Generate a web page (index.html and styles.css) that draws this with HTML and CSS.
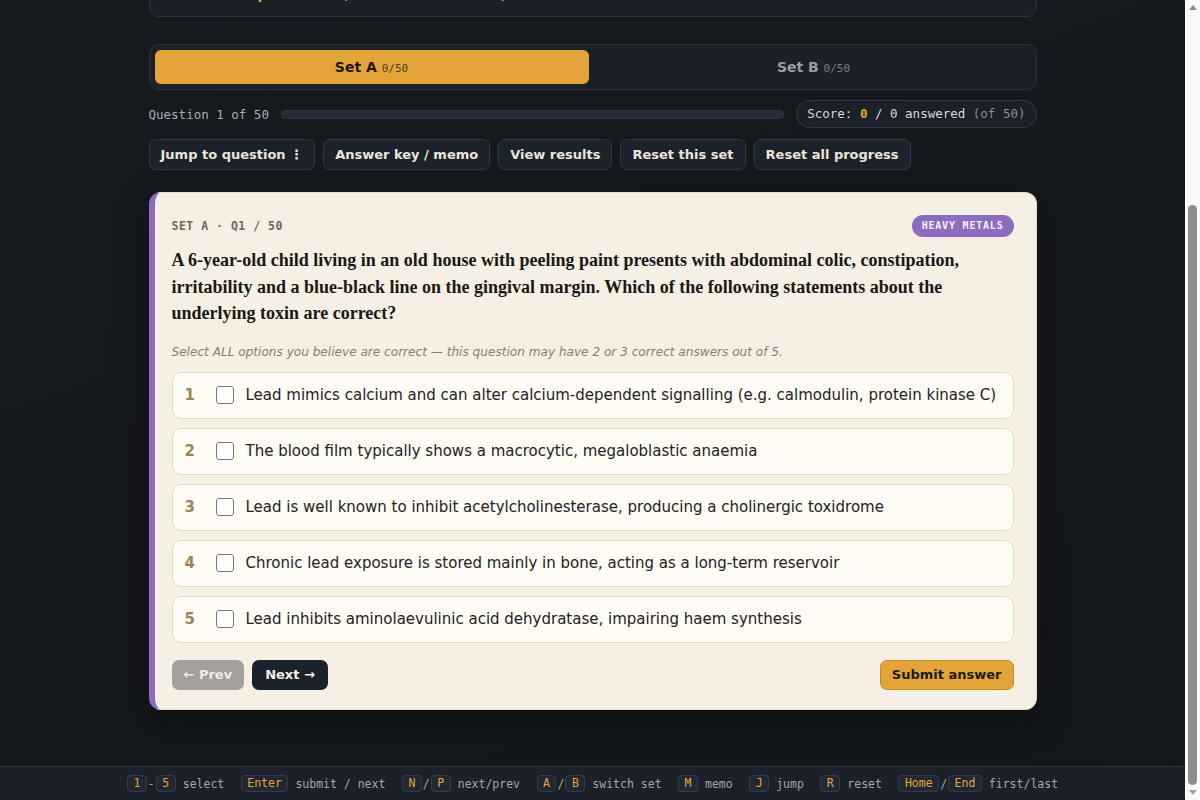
FILE: index.html
```html
<!DOCTYPE html>
<html lang="en">
<head>
<meta charset="utf-8">
<title>Toxicology MCQ Practice</title>
<link rel="stylesheet" href="styles.css">
</head>
<body>
<main class="wrap">
  <header class="intro">
    <div class="eyebrow">TOXICOLOGY · MULTI-SELECT PRACTICE</div>
    <h1 class="intro-title">Clinical Toxicology Question Bank</h1>
    <p class="intro-text">Two independent sets of 50 multi-select questions. Your progress, answers and scores are saved locally in this browser.</p>
    <div class="intro-meta">
      <span class="meta-chip">100 questions</span>
      <span class="meta-chip">2 sets</span>
      <span class="meta-chip">Keyboard friendly</span>
    </div>
  </header>

  <details class="howto">
    <summary class="howto-summary"><span class="howto-caret">›</span> How this quiz works (multi-select format)</summary>
    <div class="howto-body">Each question has 5 statements; 2 or 3 of them are correct.</div>
  </details>

  <nav class="tabs">
    <button class="tab tab-active">Set A <span class="tab-count">0/50</span></button>
    <button class="tab">Set B <span class="tab-count">0/50</span></button>
  </nav>

  <div class="progress-row">
    <span class="progress-label">Question 1 of 50</span>
    <div class="progress-bar"><div class="progress-fill" style="width:0%"></div></div>
    <span class="score-pill">Score: <span class="score-num">0</span> / 0 answered <span class="score-dim">(of 50)</span></span>
  </div>

  <div class="toolbar">
    <button class="tool-btn">Jump to question <span class="tool-dots">⋮</span></button>
    <button class="tool-btn">Answer key / memo</button>
    <button class="tool-btn">View results</button>
    <button class="tool-btn">Reset this set</button>
    <button class="tool-btn">Reset all progress</button>
  </div>

  <section class="card">
    <div class="card-head">
      <span class="card-ref">SET A · Q1 / 50</span>
      <span class="badge">HEAVY METALS</span>
    </div>
    <h2 class="question">A 6-year-old child living in an old house with peeling paint presents with abdominal colic, constipation, irritability and a blue-black line on the gingival margin. Which of the following statements about the underlying toxin are correct?</h2>
    <p class="hint">Select ALL options you believe are correct — this question may have 2 or 3 correct answers out of 5.</p>

    <div class="options">
      <label class="option"><span class="opt-num">1</span><input class="opt-check" type="checkbox"><span class="opt-text">Lead mimics calcium and can alter calcium-dependent signalling (e.g. calmodulin, protein kinase C)</span></label>
      <label class="option"><span class="opt-num">2</span><input class="opt-check" type="checkbox"><span class="opt-text">The blood film typically shows a macrocytic, megaloblastic anaemia</span></label>
      <label class="option"><span class="opt-num">3</span><input class="opt-check" type="checkbox"><span class="opt-text">Lead is well known to inhibit acetylcholinesterase, producing a cholinergic toxidrome</span></label>
      <label class="option"><span class="opt-num">4</span><input class="opt-check" type="checkbox"><span class="opt-text">Chronic lead exposure is stored mainly in bone, acting as a long-term reservoir</span></label>
      <label class="option"><span class="opt-num">5</span><input class="opt-check" type="checkbox"><span class="opt-text">Lead inhibits aminolaevulinic acid dehydratase, impairing haem synthesis</span></label>
    </div>

    <div class="card-nav">
      <div class="nav-left">
        <button class="nav-btn nav-prev">← Prev</button>
        <button class="nav-btn nav-next">Next →</button>
      </div>
      <button class="nav-btn nav-submit">Submit answer</button>
    </div>
  </section>
</main>

<footer class="shortcuts">
  <span class="sc-item"><kbd class="key">1</kbd><span class="sc-sep">-</span><kbd class="key">5</kbd><span class="sc-label">select</span></span>
  <span class="sc-item"><kbd class="key">Enter</kbd><span class="sc-label">submit / next</span></span>
  <span class="sc-item"><kbd class="key">N</kbd><span class="sc-sep">/</span><kbd class="key">P</kbd><span class="sc-label">next/prev</span></span>
  <span class="sc-item"><kbd class="key">A</kbd><span class="sc-sep">/</span><kbd class="key">B</kbd><span class="sc-label">switch set</span></span>
  <span class="sc-item"><kbd class="key">M</kbd><span class="sc-label">memo</span></span>
  <span class="sc-item"><kbd class="key">J</kbd><span class="sc-label">jump</span></span>
  <span class="sc-item"><kbd class="key">R</kbd><span class="sc-label">reset</span></span>
  <span class="sc-item"><kbd class="key">Home</kbd><span class="sc-sep">/</span><kbd class="key">End</kbd><span class="sc-label">first/last</span></span>
</footer>

<div class="scrollbar" aria-hidden="true">
  <span class="sb-arrow sb-up"></span>
  <span class="sb-track"><span class="sb-thumb"></span></span>
  <span class="sb-arrow sb-down"></span>
</div>
<script src="script.js"></script>
</body>
</html>
```

FILE: styles.css
```css
html {
  background: #15181d;
  scrollbar-width: none;
}
html::-webkit-scrollbar {
  display: none;
}
body {
  margin: 0;
  padding-right: 15px;
  background: linear-gradient(160deg, #171a20 0%, #15181d 60%, #14171c 100%);
  color: #e6e1d7;
  font-family: "DejaVu Sans", Verdana, sans-serif;
  min-height: 100vh;
}
.wrap {
  max-width: 888px;
  margin: 0 auto;
  padding: 30px 0 90px;
}

/* intro (scrolled out of view) */
.intro {
  margin-bottom: 30px;
}
.eyebrow {
  font-family: "DejaVu Sans Mono", monospace;
  font-size: 12px;
  line-height: 18px;
  color: #e3a53a;
  letter-spacing: 1px;
  margin-bottom: 10px;
}
.intro-title {
  font-family: "Liberation Serif", serif;
  font-size: 30px;
  line-height: 38px;
  margin: 0 0 8px;
  color: #f3ede2;
}
.intro-text {
  font-size: 14px;
  line-height: 22px;
  color: #a8b0ba;
  margin: 0 0 14px;
  max-width: 640px;
}
.intro-meta {
  display: flex;
  gap: 8px;
}
.meta-chip {
  font-family: "DejaVu Sans Mono", monospace;
  font-size: 12px;
  line-height: 24px;
  padding: 0 10px;
  border: 1px solid #2c333e;
  border-radius: 12px;
  color: #a8b0ba;
  background: #1b2028;
}

/* how-to */
.howto {
  background: #1b2029;
  border: 1px solid #2c333e;
  border-radius: 10px;
}
.howto-summary {
  list-style: none;
  padding: 13px 12px;
  font-size: 14px;
  line-height: 18px;
  font-weight: bold;
  color: #e3a53a;
  cursor: pointer;
}
.howto-summary::-webkit-details-marker {
  display: none;
}
.howto-caret {
  display: inline-block;
  width: 12px;
}
.howto-body {
  padding: 0 16px 14px;
  font-size: 13px;
  color: #a8b0ba;
}

/* tabs */
.tabs {
  margin-top: 27px;
  display: grid;
  grid-template-columns: 1fr 1fr;
  gap: 8px;
  padding: 5px;
  background: #1b2029;
  border: 1px solid #2c333e;
  border-radius: 10px;
}
.tab {
  height: 34px;
  border: 0;
  border-radius: 6px;
  background: transparent;
  color: #959eaa;
  font-family: "DejaVu Sans", sans-serif;
  font-size: 14px;
  font-weight: bold;
}
.tab-active {
  background: #e3a53a;
  color: #1c1710;
}
.tab-count {
  font-family: "DejaVu Sans Mono", monospace;
  font-size: 11px;
  font-weight: normal;
  opacity: 0.75;
}

/* progress */
.progress-row {
  margin-top: 10px;
  display: flex;
  align-items: center;
  gap: 12px;
}
.progress-label {
  font-family: "DejaVu Sans Mono", monospace;
  font-size: 12.5px;
  color: #a7afb9;
}
.progress-bar {
  flex: 1;
  height: 7px;
  border-radius: 4px;
  background: #262d38;
  border: 1px solid #2e3541;
  overflow: hidden;
}
.progress-fill {
  height: 100%;
  background: #e3a53a;
}
.score-pill {
  font-family: "DejaVu Sans Mono", monospace;
  font-size: 12.5px;
  line-height: 26px;
  padding: 0 10px;
  border: 1px solid #313946;
  border-radius: 14px;
  background: #1b2029;
  color: #d6d9dd;
}
.score-num {
  color: #e3a53a;
  font-weight: bold;
}
.score-dim {
  color: #858e99;
}

/* toolbar */
.toolbar {
  margin-top: 11px;
  display: flex;
  gap: 8px;
}
.tool-btn {
  height: 31px;
  padding: 0 11px;
  background: #1c222b;
  border: 1px solid #303845;
  border-radius: 7px;
  color: #ebe5d9;
  font-family: "DejaVu Sans", sans-serif;
  font-size: 13px;
  font-weight: bold;
}

/* card */
.card {
  margin-top: 22px;
  background: #f6efe4;
  border: 1px solid #e4dac8;
  border-left: 6px solid #8b6cc0;
  border-radius: 12px;
  padding: 22px 22px 19px 17px;
  box-shadow: 0 12px 34px rgba(0, 0, 0, 0.35);
  color: #1d1a16;
}
.card-head {
  display: flex;
  justify-content: space-between;
  align-items: center;
  height: 22px;
}
.card-ref {
  font-family: "DejaVu Sans Mono", monospace;
  font-size: 11.5px;
  font-weight: bold;
  letter-spacing: 0.5px;
  color: #6f665b;
}
.badge {
  font-family: "DejaVu Sans Mono", monospace;
  font-size: 10px;
  font-weight: bold;
  letter-spacing: 0.8px;
  line-height: 22px;
  padding: 0 10px;
  border-radius: 11px;
  background: #8b6cc0;
  color: #f7f2ff;
}
.question {
  margin: 10px 0 0;
  font-family: "Liberation Serif", "Times New Roman", serif;
  font-size: 18px;
  line-height: 26.5px;
  font-weight: bold;
  color: #1b1813;
}
.hint {
  margin: 16px 0 0;
  font-size: 12.1px;
  line-height: 18px;
  font-style: italic;
  color: #8c7e69;
}
.options {
  margin-top: 11px;
  display: flex;
  flex-direction: column;
  gap: 9px;
}
.option {
  display: flex;
  align-items: center;
  padding: 12px 12px;
  background: #fffcf4;
  border: 1px solid #e3d9c0;
  border-radius: 9px;
  cursor: pointer;
}
.opt-num {
  width: 18px;
  margin-right: 13px;
  font-size: 15px;
  font-weight: bold;
  color: #9b8456;
}
.opt-check {
  appearance: none;
  -webkit-appearance: none;
  width: 18px;
  height: 18px;
  margin: 0 12px 0 0;
  border: 1px solid #777;
  border-radius: 3px;
  background: #fff;
  flex: none;
}
.opt-text {
  font-size: 15px;
  line-height: 21px;
  color: #23211d;
}

/* nav */
.card-nav {
  margin-top: 17px;
  display: flex;
  justify-content: space-between;
  align-items: center;
}
.nav-left {
  display: flex;
  gap: 8px;
}
.nav-btn {
  height: 30px;
  padding: 0 11px;
  border-radius: 7px;
  font-family: "DejaVu Sans", sans-serif;
  font-size: 13px;
  font-weight: bold;
  border: 1px solid transparent;
}
.nav-next {
  padding: 0 12px;
  background: #1c222b;
  color: #f4efe6;
}
.nav-prev {
  background: #a3a09b;
  color: #efebe4;
}
.nav-submit {
  background: #e3a53a;
  border-color: #c98b25;
  color: #1f1a10;
}

/* shortcuts footer */
.shortcuts {
  position: fixed;
  left: 0;
  right: 15px;
  bottom: 0;
  height: 33px;
  background: #1b2029;
  border-top: 1px solid #2b323d;
  display: flex;
  justify-content: center;
  align-items: center;
  gap: 16.5px;
  font-family: "DejaVu Sans Mono", monospace;
  font-size: 11.5px;
  color: #a0a8b2;
}
.sc-item {
  display: flex;
  align-items: center;
}
.key {
  font-family: "DejaVu Sans Mono", monospace;
  font-size: 11.5px;
  line-height: 15px;
  padding: 0 5.5px;
  border: 1px solid #343c48;
  border-radius: 4px;
  background: #222833;
  color: #e3a53a;
}
.sc-sep {
  margin: 0 1px;
}
.sc-label {
  margin-left: 7px;
}

/* window scrollbar (drawn over the page edge) */
.scrollbar {
  position: fixed;
  top: 0;
  right: 0;
  bottom: 0;
  width: 15px;
  background: #fafafa;
  display: flex;
  flex-direction: column;
}
.sb-arrow {
  height: 15px;
  flex: none;
  display: flex;
  justify-content: center;
  align-items: center;
}
.sb-up::before,
.sb-down::before {
  content: "";
  width: 0;
  height: 0;
  border-left: 4px solid transparent;
  border-right: 4px solid transparent;
}
.sb-up::before {
  border-bottom: 5px solid #8a8a8a;
}
.sb-down::before {
  border-top: 5px solid #a0a0a0;
}
.sb-track {
  flex: 1;
  display: flex;
  flex-direction: column;
  justify-content: flex-end;
  padding: 0 3px 0 3px;
}
.sb-thumb {
  height: 580px;
  border-radius: 5px;
  background: #8e8e8e;
}
```

FILE: script.js
```js
window.addEventListener('DOMContentLoaded', function () {
  window.scrollTo(0, document.documentElement.scrollHeight);
});
window.scrollTo(0, document.documentElement.scrollHeight);
```
